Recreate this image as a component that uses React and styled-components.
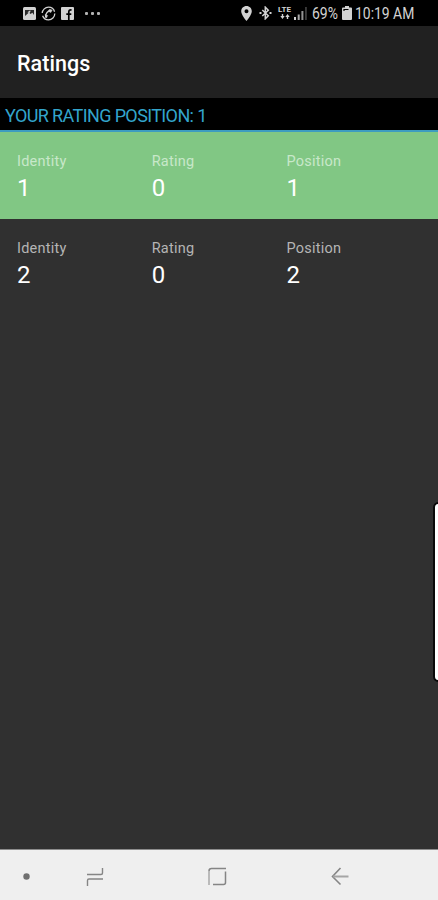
import React from 'react'
import styled, { createGlobalStyle } from 'styled-components';


const GlobalStyle = createGlobalStyle`
    * {
        box-sizing: border-box;
    }

    body {
        margin: 0;
        background: #303030;
        font-family: Roboto, 'Liberation Sans', sans-serif;
    }
`;

const Screen = styled.div`
    position: relative;
    display: flex;
    flex-direction: column;
    width: 438px;
    height: 900px;
    overflow: hidden;
    background-color: #303030;
`;

const StatusBar = styled.div`
    display: flex;
    justify-content: space-between;
    height: 26px;
    padding: 0 24px 0 23px;
    background-color: #000;
    color: #d2d2d2;
`;

const StatusGroup = styled.div`
    display: flex;
    align-items: center;
    height: 26px;
`;

const StatusIcon = styled.svg`
    display: block;
    flex: none;
    margin-left: ${({ $gap }) => $gap || 0}px;
`;

/* the status font is a narrow cut, so the text is squeezed from its left edge */
const StatusText = styled.span`
    width: ${({ $width }) => $width}px;
    margin-left: ${({ $gap }) => $gap}px;
    padding-top: 1px;
    font-size: 16px;
    line-height: 26px;
    white-space: nowrap;
    transform: scaleX(0.87);
    transform-origin: left;
`;

const Network = styled.div`
    display: flex;
    flex-direction: column;
    align-items: center;
    width: 15px;
    height: 14px;
    margin-left: 5px;
`;

const NetworkLabel = styled.span`
    font-size: 8px;
    font-weight: 700;
    line-height: 8px;
`;

const AppBar = styled.header`
    display: flex;
    align-items: center;
    height: 72px;
    padding: 2px 17px 0;
    background-color: #212121;
`;

const Title = styled.h1`
    margin: 0;
    color: #fff;
    font-size: 21.5px;
    font-weight: 500;
    letter-spacing: 0.05px;
`;

const SectionHeader = styled.h2`
    height: 34px;
    margin: 0;
    padding: 1px 5px 0;
    background-color: #000;
    border-bottom: 2px solid #3d9cc0;
    color: #33a5cc;
    font-size: 18px;
    font-weight: 400;
    line-height: 34px;
    letter-spacing: -0.62px;
    white-space: nowrap;
`;

const Row = styled.div`
    display: grid;
    grid-template-columns: repeat(3, 134.7px);
    height: ${({ $current }) => ($current ? 87 : 88)}px;
    padding: 21px 17px 0;
    background-color: ${({ $current }) => ($current ? '#81c784' : '#303030')};
    color: ${({ $current }) => ($current ? '#c8e8ca' : '#b5b5b5')};
`;

const Label = styled.div`
    font-size: 14.5px;
    line-height: 18px;
    letter-spacing: 0.25px;
`;

const Value = styled.div`
    margin-top: 3px;
    color: #fff;
    font-size: 24px;
    line-height: 29px;
`;

const EdgeHandle = styled.div`
    position: absolute;
    top: 502px;
    right: -6px;
    width: 11px;
    height: 180px;
    border: 2px solid #090909;
    border-radius: 7px;
    background-color: #fff;
`;

const NavBar = styled.nav`
    display: flex;
    align-items: center;
    height: 51px;
    margin-top: auto;
    border-top: 1px solid #8c8c8c;
    background-color: #efefef;
`;

const NavButton = styled.button`
    display: flex;
    width: 20px;
    height: 20px;
    padding: 0;
    margin: 1px 0 0 ${({ $gap }) => $gap}px;
    border: none;
    background: none;
    color: #858585;
`;

const PhotoIcon = () => (
    <StatusIcon width="13" height="13" viewBox="0 0 13 13">
        <rect width="13" height="13" rx="1.5" fill="currentColor" />
        <path d="M2 9V3h9v5L9.400 5.800 7.500 7 6 5.500z" fill="#000" opacity="0.8" />
        <path d="M4.500 5.500l1.800-1.800h1.500L6.500 6z" fill="currentColor" />
    </StatusIcon>
);

const CallIcon = () => (
    <StatusIcon $gap={5} width="15" height="15" viewBox="0 0 15 15" fill="none" stroke="currentColor">
        <circle cx="7.5" cy="7.5" r="6.3" strokeWidth="1.3" strokeDasharray="17 2.8" />
        <path d="M4.7 11.5C4 8 6.8 4.5 10 4.2" strokeWidth="1.4" />
        <path d="M8.2 3.5l3 .5-1.4 2.6-2-1.2zM4 8.7l2.7.8-1.3 2.5z" fill="currentColor" strokeWidth="0.5" />
    </StatusIcon>
);

const FacebookIcon = () => (
    <StatusIcon $gap={5} width="13" height="13" viewBox="0 0 13 13">
        <rect width="13" height="13" rx="1" fill="currentColor" />
        <path d="M7.8 13V5.1c0-1.8.8-2.3 2.8-2.1M5.3 7.2h5" fill="none" stroke="#000" strokeWidth="1.7" />
    </StatusIcon>
);

const MoreIcon = () => (
    <StatusIcon $gap={11} width="15" height="3" viewBox="0 0 15 3" fill="currentColor" opacity="0.85">
        <rect width="3" height="3" rx="1" />
        <rect x="6" width="3" height="3" rx="1" />
        <rect x="12" width="3" height="3" rx="1" />
    </StatusIcon>
);

const LocationIcon = () => (
    <StatusIcon width="11" height="15" viewBox="0 0 11 15">
        <path
            d="M5.5 0C2.4 0 .2 2.3.2 5.2c0 3.6 5.3 9.8 5.3 9.8s5.3-6.2 5.3-9.8C10.8 2.3 8.6 0 5.5 0zm0 3.2a2 2 0 1 1 0 4 2 2 0 0 1 0-4z"
            fill="currentColor"
            fillRule="evenodd"
        />
    </StatusIcon>
);

const BluetoothIcon = () => (
    <StatusIcon $gap={7} width="13" height="14" viewBox="0 0 13 14" fill="none" stroke="currentColor">
        <path d="M3.3 4l6 5.8-3 3V1.2l3 3-6 5.8" strokeWidth="1.5" />
        <path d="M.5 7h2M10.5 7h2" strokeWidth="2" />
    </StatusIcon>
);

const DataArrowsIcon = () => (
    <StatusIcon width="10" height="5" viewBox="0 0 10 5" fill="currentColor">
        <path d="M1.8 0h1.4v2h1.5L2.5 5 .3 2h1.5zM6.8 5V3H5.3l2.2-3 2.2 3H8.2v2z" />
    </StatusIcon>
);

const SignalIcon = () => (
    <StatusIcon $gap={2} width="14" height="13" viewBox="0 0 14 13" fill="currentColor">
        <rect y="10" width="2" height="3" />
        <rect x="3.7" y="7.5" width="2" height="5.5" opacity="0.8" />
        <rect x="7.4" y="4" width="2" height="9" opacity="0.7" />
        <rect x="11.2" width="1.5" height="13" opacity="0.35" />
    </StatusIcon>
);

const BatteryIcon = () => (
    <StatusIcon width="10" height="14" viewBox="0 0 10 14">
        <path d="M3 0h4v1.5h2q1 0 1 1V13q0 1-1 1H1q-1 0-1-1V2.500q0-1 1-1h2z" fill="currentColor" />
        <path d="M2 5V3.500h4.500" fill="none" stroke="#000" strokeWidth="1.200" />
    </StatusIcon>
);

const RecentsIcon = () => (
    <svg width="20" height="20" viewBox="0 0 20 20" fill="none" stroke="currentColor" strokeWidth="1.4">
        <path d="M2 8.500h14q1.500 0 1.500-1.500V2M18 13H4q-1.500 0-1.500 1.500V20" />
    </svg>
);

const HomeIcon = () => (
    <svg width="20" height="20" viewBox="0 0 20 20" fill="none" stroke="currentColor" strokeWidth="1.5">
        <path d="M19 2.500H4.500Q2 2.500 2 5" />
        <path d="M2 5v14" stroke="#a9a9a9" />
        <path d="M6 18.500h10.500q2 0 2-2V5.500" />
    </svg>
);

const BackIcon = () => (
    <svg width="20" height="20" viewBox="0 0 20 20" fill="none" stroke="currentColor" strokeWidth="1.6">
        <path d="M10.500 2L2.500 10.500l8 8" />
        <path d="M3 10.500h15.500" stroke="#a5a5a5" strokeWidth="2" />
    </svg>
);

const ratings = [
    { identity: 1, rating: 0, position: 1 },
    { identity: 2, rating: 0, position: 2 },
];

const myPosition = 1;

const Field = ({ label, value }) => (
    <div>
        <Label>{label}</Label>
        <Value>{value}</Value>
    </div>
);

const RatingRow = ({ item }) => (
    <Row $current={item.position === myPosition}>
        <Field label="Identity" value={item.identity} />
        <Field label="Rating" value={item.rating} />
        <Field label="Position" value={item.position} />
    </Row>
);


const App = () => {

    return (
        <Screen>
            <GlobalStyle />
            <StatusBar>
                <StatusGroup>
                    <PhotoIcon />
                    <CallIcon />
                    <FacebookIcon />
                    <MoreIcon />
                </StatusGroup>
                <StatusGroup>
                    <LocationIcon />
                    <BluetoothIcon />
                    <Network>
                        <NetworkLabel>LTE</NetworkLabel>
                        <DataArrowsIcon />
                    </Network>
                    <SignalIcon />
                    <StatusText $gap={4} $width={30}>69%</StatusText>
                    <BatteryIcon />
                    <StatusText $gap={3} $width={59}>10:19 AM</StatusText>
                </StatusGroup>
            </StatusBar>

            <AppBar>
                <Title>Ratings</Title>
            </AppBar>

            <SectionHeader>YOUR RATING POSITION: {myPosition}</SectionHeader>

            {ratings.map((item) => (
                <RatingRow key={item.identity} item={item} />
            ))}

            <EdgeHandle />

            <NavBar>
                <NavButton $gap={16} aria-label="Hide bar">
                    <svg width="20" height="20" viewBox="0 0 20 20" fill="#707070">
                        <circle cx="10.500" cy="10.500" r="3.200" />
                    </svg>
                </NavButton>
                <NavButton $gap={49} aria-label="Recents"><RecentsIcon /></NavButton>
                <NavButton $gap={102} aria-label="Home"><HomeIcon /></NavButton>
                <NavButton $gap={103} aria-label="Back"><BackIcon /></NavButton>
            </NavBar>
        </Screen>
    )
}

export default App
